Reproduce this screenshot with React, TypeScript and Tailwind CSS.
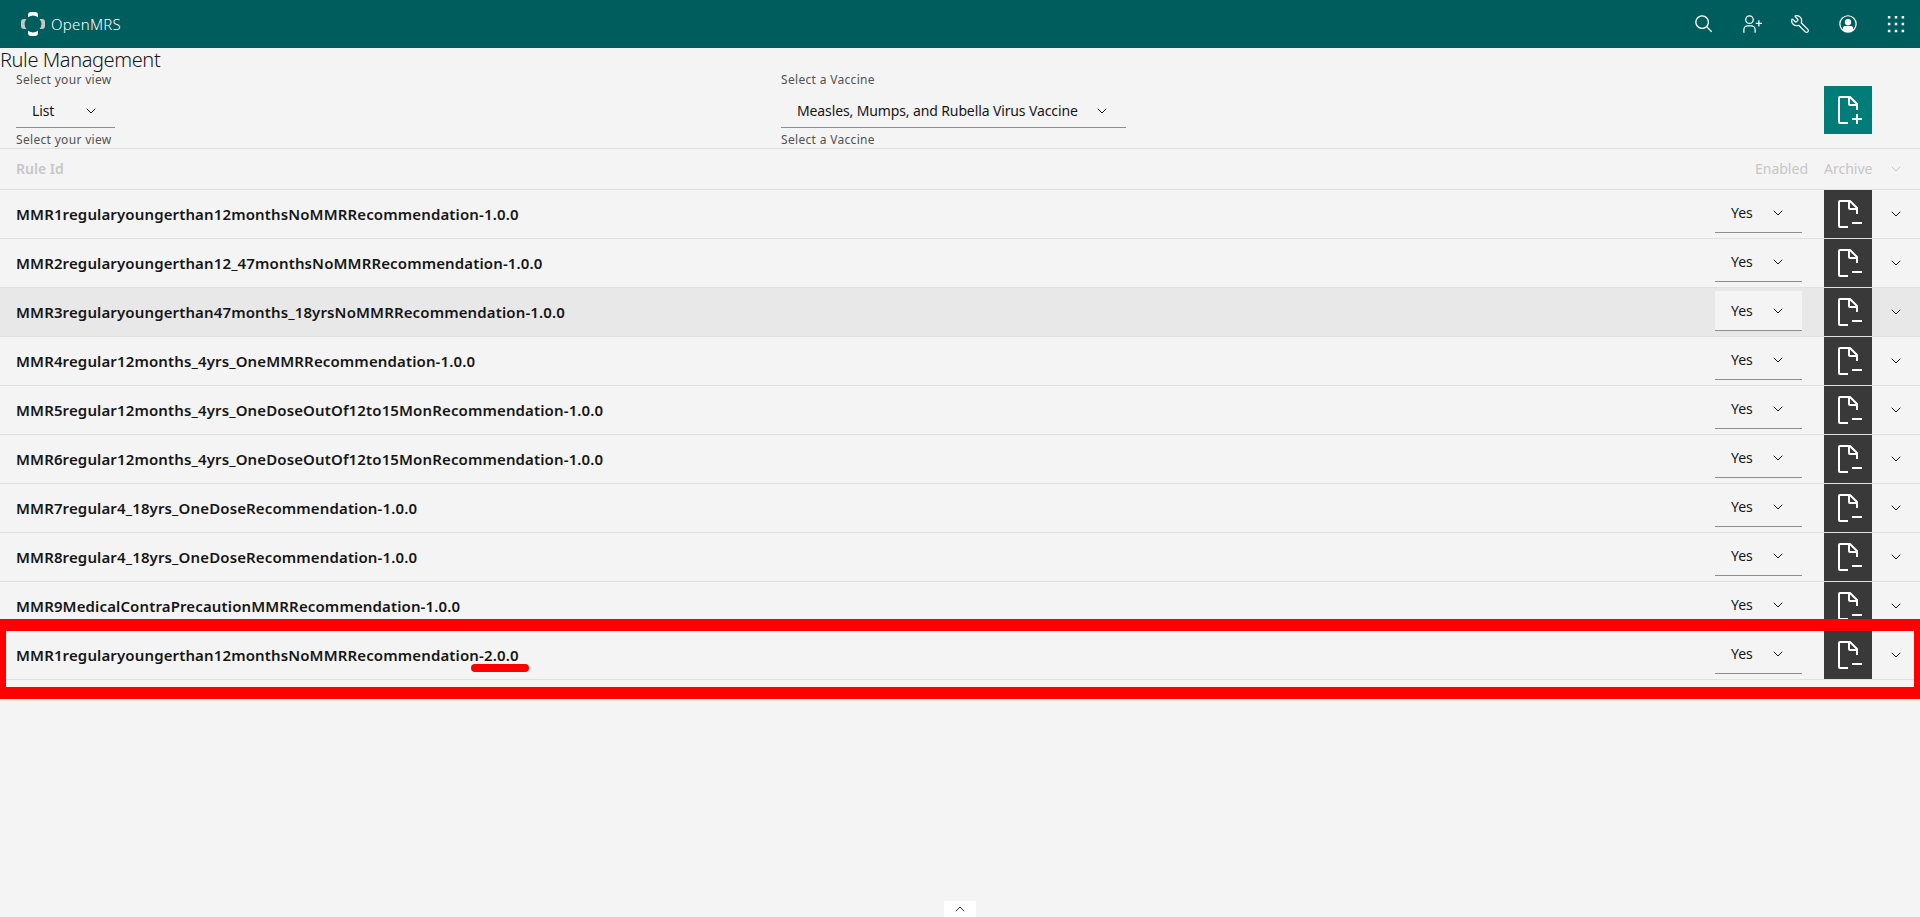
import { ChevronDown, ChevronUp, Wrench } from 'lucide-react';

const rules = [
  'MMR1regularyoungerthan12monthsNoMMRRecommendation-1.0.0',
  'MMR2regularyoungerthan12_47monthsNoMMRRecommendation-1.0.0',
  'MMR3regularyoungerthan47months_18yrsNoMMRRecommendation-1.0.0',
  'MMR4regular12months_4yrs_OneMMRRecommendation-1.0.0',
  'MMR5regular12months_4yrs_OneDoseOutOf12to15MonRecommendation-1.0.0',
  'MMR6regular12months_4yrs_OneDoseOutOf12to15MonRecommendation-1.0.0',
  'MMR7regular4_18yrs_OneDoseRecommendation-1.0.0',
  'MMR8regular4_18yrs_OneDoseRecommendation-1.0.0',
  'MMR9MedicalContraPrecautionMMRRecommendation-1.0.0',
  'MMR1regularyoungerthan12monthsNoMMRRecommendation-2.0.0',
];

const docPath =
  'M16 28H8V4h8v6a2.006 2.006 0 0 0 2 2h6v4h2v-6a.91.91 0 0 0-.3-.7l-7-7A.909.909 0 0 0 18 2H8a2.006 2.006 0 0 0-2 2v24a2.006 2.006 0 0 0 2 2h8zm2-23.6l5.6 5.6H18z';

function DocIcon({ add }: { add?: boolean }) {
  return (
    <svg width="32" height="32" viewBox="0 0 32 32" fill="white">
      <path d={docPath} />
      {add ? <path d="M30 24h-4v-4h-2v4h-4v2h4v4h2v-4h4v-2z" /> : <path d="M20 24h10v2H20z" />}
    </svg>
  );
}

function Logo() {
  return (
    <svg width="24" height="24" viewBox="0 0 24 24">
      <path fill="white" d="M7 3Q7 0 10 0h4q3 0 3 3v2.2a8.5 8.5 0 0 0-10 0z" />
      <path fill="white" d="M7 21q0 3 3 3h4q3 0 3-3v-2.2a8.5 8.5 0 0 1-10 0z" />
      <path fill="#c6c6c6" d="M5.4 7a8.5 8.5 0 0 0 0 10H3q-3 0-3-3v-4q0-3 3-3z" />
      <path fill="#c6c6c6" d="M18.6 7a8.5 8.5 0 0 1 0 10H21q3 0 3-3v-4q0-3-3-3z" />
    </svg>
  );
}

function HeaderActions() {
  const cell = 'flex h-12 w-12 items-center justify-center text-white';
  return (
    <div className="flex">
      <div className={cell}>
        <svg width="20" height="20" viewBox="0 0 32 32" fill="currentColor">
          <path d="m29 27.586-7.552-7.552a11.018 11.018 0 1 0-1.414 1.414L27.586 29ZM4 13a9 9 0 1 1 9 9 9.01 9.01 0 0 1-9-9Z" />
        </svg>
      </div>
      <div className={cell}>
        <svg width="20" height="20" viewBox="0 0 32 32" fill="currentColor">
          <path d="M32 14h-4v-4h-2v4h-4v2h4v4h2v-4h4v-2z" />
          <path d="M12 4a5 5 0 1 1-5 5 5 5 0 0 1 5-5m0-2a7 7 0 1 0 7 7A7 7 0 0 0 12 2zM22 30h-2v-5a5 5 0 0 0-5-5H9a5 5 0 0 0-5 5v5H2v-5a7 7 0 0 1 7-7h6a7 7 0 0 1 7 7z" />
        </svg>
      </div>
      <div className={cell}>
        <Wrench size={20} strokeWidth={1.4} className="-scale-x-100" />
      </div>
      <div className={cell}>
        <svg width="20" height="20" viewBox="0 0 32 32" fill="currentColor">
          <path d="M16 8a5 5 0 1 0 5 5 5 5 0 0 0-5-5z" />
          <path d="M16 2a14 14 0 1 0 14 14A14.016 14.016 0 0 0 16 2zm8 22.7V23a4 4 0 0 0-4-4h-8a4 4 0 0 0-4 4v1.7a12 12 0 1 1 16 0z" />
          <path d="M8 24.7V23a4 4 0 0 1 4-4h8a4 4 0 0 1 4 4v1.7A12 12 0 0 1 16 28a12 12 0 0 1-8-3.3z" />
        </svg>
      </div>
      <div className={cell}>
        <svg width="20" height="20" viewBox="0 0 32 32" fill="currentColor">
          <path d="M3 3h4v4H3zM14 3h4v4h-4zM25 3h4v4h-4zM3 14h4v4H3zM14 14h4v4h-4zM25 14h4v4h-4zM3 25h4v4H3zM14 25h4v4h-4zM25 25h4v4h-4z" />
        </svg>
      </div>
    </div>
  );
}

function Filter({ label, value, width }: { label: string; value: string; width: string }) {
  return (
    <div className={width}>
      <div className="h-4 text-xs leading-4 tracking-[0.32px] text-[#525252]">{label}</div>
      <div className="flex h-10 items-center justify-between border-b border-[#8d8d8d] pt-[6px] pr-4 pl-4 text-sm tracking-[-0.12px] text-[#161616]">
        <span>{value}</span>
        <ChevronDown size={16} strokeWidth={1.5} />
      </div>
      <div className="mt-1 h-4 text-xs leading-4 tracking-[0.32px] text-[#525252]">{label}</div>
    </div>
  );
}

function RuleRow({ id, hovered }: { id: string; hovered: boolean }) {
  return (
    <div className={`flex h-[49px] border-b border-[#e0e0e0] ${hovered ? 'bg-[#e8e8e8]' : ''}`}>
      <div className="flex-1 pt-[15px] pl-4 text-[15px] leading-[18px] font-semibold tracking-[0.13px] text-[#161616]">{id}</div>
      <div
        className={`mt-[3px] mr-[22px] flex h-10 w-[87px] items-center justify-between border-b border-[#8d8d8d] pr-[16px] pl-4 text-sm text-[#161616] ${
          hovered ? 'bg-[#f4f4f4]' : ''
        }`}
      >
        <span>Yes</span>
        <ChevronDown size={16} strokeWidth={1.5} />
      </div>
      <div className="flex h-12 w-12 items-center justify-center bg-[#393939]">
        <DocIcon />
      </div>
      <div className="flex h-12 w-12 items-center justify-center text-[#161616]">
        <ChevronDown size={16} strokeWidth={1.5} />
      </div>
    </div>
  );
}

export default function App() {
  return (
    <div className="relative h-[917px] overflow-hidden bg-[#f4f4f4] font-['Noto_Sans',sans-serif]">
      <header className="flex h-12 items-center justify-between bg-[#005d5d] pl-[21px]">
        <div className="flex items-center gap-[6px]">
          <Logo />
          <span className="text-[15px] font-light tracking-[0.3px] text-white">OpenMRS</span>
        </div>
        <HeaderActions />
      </header>

      <h1 className="h-6 text-xl leading-6 font-light tracking-[-0.4px] text-[#161616]">Rule Management</h1>

      <div className="flex h-[76px] pl-4">
        <Filter label="Select your view" value="List" width="w-[99px]" />
        <Filter label="Select a Vaccine" value="Measles, Mumps, and Rubella Virus Vaccine" width="ml-[666px] w-[345px]" />
        <div className="mt-[14px] ml-[698px] flex h-12 w-12 items-center justify-center bg-[#007d79]">
          <DocIcon add />
        </div>
      </div>

      <div className="flex h-[42px] items-center border-y border-[#e0e0e0] text-sm text-[#c6c6c6]">
        <div className="flex-1 pl-4 font-semibold">Rule Id</div>
        <div className="mr-4">Enabled</div>
        <div className="w-12 text-center">Archive</div>
        <div className="flex w-12 justify-center">
          <ChevronDown size={16} strokeWidth={1.5} />
        </div>
      </div>

      {rules.map((id, i) => (
        <RuleRow key={i} id={id} hovered={i === 2} />
      ))}

      {/* annotation drawn over the screenshot */}
      <div className="absolute top-[619px] left-0 h-[80px] w-[1920px] border-x-[6px] border-y-[12px] border-[#ff0000]" />
      <div className="absolute top-[664px] left-[471px] h-2 w-[58px] rounded-full bg-[#ff0000]" />

      <div className="absolute bottom-0 left-[944px] flex h-4 w-8 items-center justify-center bg-white text-[#393939]">
        <ChevronUp size={16} strokeWidth={1.5} />
      </div>
    </div>
  );
}
